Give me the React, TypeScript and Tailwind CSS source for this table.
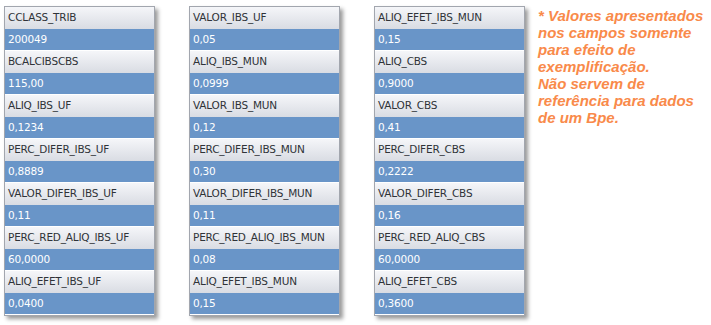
const columns: [string, string][][] = [
  [
    ['CCLASS_TRIB', '200049'],
    ['BCALCIBSCBS', '115,00'],
    ['ALIQ_IBS_UF', '0,1234'],
    ['PERC_DIFER_IBS_UF', '0,8889'],
    ['VALOR_DIFER_IBS_UF', '0,11'],
    ['PERC_RED_ALIQ_IBS_UF', '60,0000'],
    ['ALIQ_EFET_IBS_UF', '0,0400'],
  ],
  [
    ['VALOR_IBS_UF', '0,05'],
    ['ALIQ_IBS_MUN', '0,0999'],
    ['VALOR_IBS_MUN', '0,12'],
    ['PERC_DIFER_IBS_MUN', '0,30'],
    ['VALOR_DIFER_IBS_MUN', '0,11'],
    ['PERC_RED_ALIQ_IBS_MUN', '0,08'],
    ['ALIQ_EFET_IBS_MUN', '0,15'],
  ],
  [
    ['ALIQ_EFET_IBS_MUN', '0,15'],
    ['ALIQ_CBS', '0,9000'],
    ['VALOR_CBS', '0,41'],
    ['PERC_DIFER_CBS', '0,2222'],
    ['VALOR_DIFER_CBS', '0,16'],
    ['PERC_RED_ALIQ_CBS', '60,0000'],
    ['ALIQ_EFET_CBS', '0,3600'],
  ],
];

function FieldPanel({ fields }: { fields: [string, string][] }) {
  return (
    <div className="w-[151px] border border-[#a2a6ae] bg-white shadow-[3px_3px_4px_rgba(0,0,0,0.4)]">
      {fields.map(([label, value]) => (
        <div key={label}>
          <div className="flex h-[22px] items-center bg-gradient-to-b from-[#f5f6f9] to-[#d9dce3] px-[3px] text-[#2f3338]">
            {label}
          </div>
          <div className="flex h-[22px] items-center border-b border-white bg-[#6995c8] px-[3px] text-white">
            {value}
          </div>
        </div>
      ))}
    </div>
  );
}

export default function App() {
  return (
    <div className="flex h-[325px] w-[711px] items-start bg-white pl-[4px] pt-[6px]">
      <div className="flex items-start gap-[34px] font-['DejaVu_Sans',sans-serif] text-[10.5px] tracking-[-0.2px]">
        {columns.map((c, i) => (
          <FieldPanel key={i} fields={c} />
        ))}
      </div>
      <p className="ml-[13px] mt-[1px] font-['Liberation_Sans',Arial,sans-serif] text-[15px] font-bold italic leading-[17px] text-[#f98a4a]">
        * Valores apresentados
        <br />
        nos campos somente
        <br />
        para efeito de
        <br />
        exemplificação.
        <br />
        Não servem de
        <br />
        referência para dados
        <br />
        de um Bpe.
      </p>
    </div>
  );
}
